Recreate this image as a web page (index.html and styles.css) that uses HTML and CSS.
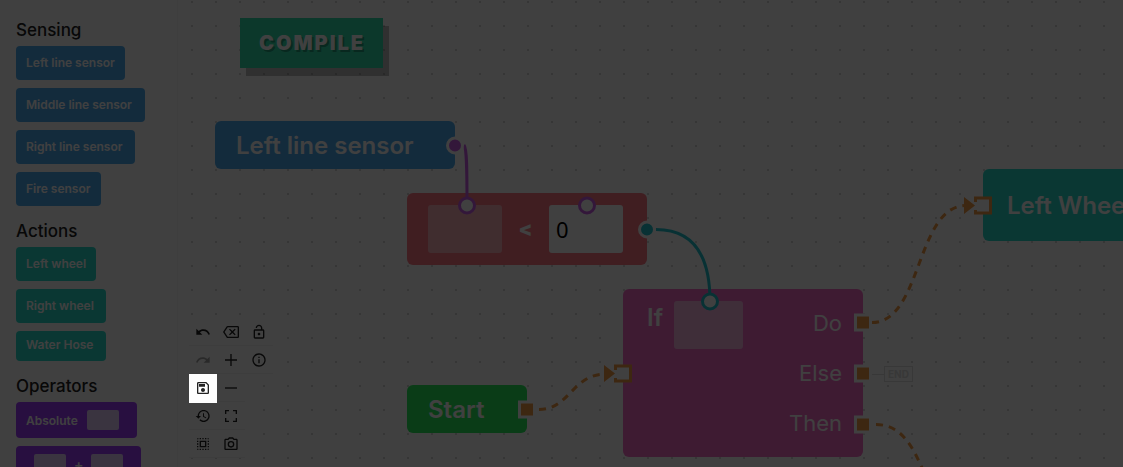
FILE: index.html
```html
<!DOCTYPE html>
<html lang="en">
<head>
<meta charset="utf-8">
<title>Robot block editor</title>
<link rel="stylesheet" href="styles.css">
</head>
<body>
<div class="app">
  <aside class="sidebar">
    <section class="group">
      <h2 class="group-title">Sensing</h2>
      <div class="chip sensing w-109">Left line sensor</div>
      <div class="chip sensing w-129">Middle line sensor</div>
      <div class="chip sensing w-119">Right line sensor</div>
      <div class="chip sensing w-85">Fire sensor</div>
    </section>
    <section class="group">
      <h2 class="group-title">Actions</h2>
      <div class="chip action w-80">Left wheel</div>
      <div class="chip action w-90">Right wheel</div>
      <div class="chip action short w-90">Water Hose</div>
    </section>
    <section class="group">
      <h2 class="group-title">Operators</h2>
      <div class="chip operator w-121">Absolute <span class="slot"></span></div>
      <div class="chip operator pair w-125"><span class="slot"></span>+<span class="slot"></span></div>
    </section>
  </aside>

  <main class="workspace">
    <div class="canvas">
      <div class="node sensor-node">Left line sensor</div>
      <div class="node less-node">
        <span class="field empty"></span>
        <span class="operator-sign">&lt;</span>
        <input class="field" type="text" value="0" aria-label="Right operand">
      </div>
      <div class="node if-node">
        <div class="condition">If <span class="field empty if-field"></span></div>
        <div class="branches"><span>Do</span><span>Else</span><span>Then</span></div>
      </div>
      <div class="node start-node">Start</div>
      <div class="node wheel-node">Left Wheel</div>

      <svg class="edges" width="945" height="467" viewBox="178 0 945 467" aria-hidden="true">
        <g fill="none" stroke-width="3">
          <path stroke="#cc5de8" d="M464 145C467 148 467 170 467 205.500"/>
          <path stroke="#22c4cf" d="M656 229.500C692 229.500 710 254 710 301.500"/>
          <g stroke="#f49a44" stroke-dasharray="7 6">
            <path d="M539 409.500C570 409.500 572 374 606 374"/>
            <path d="M872 322.500C922 322.500 916 205.500 966 205.500"/>
            <path d="M876 424.500C908 424.500 917 460 928 480"/>
          </g>
          <path stroke="#ddd" stroke-width="1" d="M872 374.500H884"/>
        </g>
        <g stroke-width="3">
          <g fill="#cc5de8" stroke="#fff"><circle cx="455" cy="145.500" r="7.500"/></g>
          <g fill="#fff" stroke="#cc5de8"><circle cx="467" cy="205.500" r="7.500"/><circle cx="587" cy="205.500" r="7.500"/></g>
          <circle cx="647" cy="229.500" r="7.500" fill="#22c4cf" stroke="#fff"/>
          <circle cx="710" cy="301.500" r="7.500" fill="#fff" stroke="#22c4cf"/>
          <g fill="#f49a44" stroke="#fff">
            <rect x="519.500" y="402" width="15" height="15"/>
            <rect x="855.500" y="315" width="15" height="15"/>
            <rect x="855.500" y="366" width="15" height="15"/>
            <rect x="855.500" y="417" width="15" height="15"/>
          </g>
          <g fill="#fff" stroke="#f49a44">
            <rect x="615.500" y="366" width="15" height="15"/>
            <rect x="975.500" y="198" width="15" height="15"/>
          </g>
        </g>
        <path fill="#fff" d="M614 370h3v8h-3zM974 202h3v8h-3z"/>
        <path fill="#f49a44" d="M604 365l11 8.500-11 8.500zM964 197l11 8.500-11 8.500z"/>
      </svg>
      <span class="end-tag">END</span>
      <button class="compile" type="button">COMPILE</button>
    </div>

    <div class="tools">
      <button class="tool" type="button" aria-label="Undo"><svg viewBox="0 0 24 24"><path d="M12.500 8c-2.650 0-5.050.990-6.900 2.600L2 7v9h9l-3.620-3.620c1.390-1.160 3.160-1.880 5.120-1.880 3.540 0 6.550 2.310 7.600 5.500l2.370-.780C21.080 11.030 17.150 8 12.500 8z"/></svg></button>
      <button class="tool" type="button" aria-label="Redo" disabled><svg viewBox="0 0 24 24"><path d="M18.400 10.600C16.550 8.990 14.150 8 11.500 8c-4.650 0-8.580 3.030-9.960 7.220L3.900 16c1.050-3.190 4.050-5.500 7.600-5.500 1.950 0 3.730.720 5.120 1.880L13 16h9V7l-3.600 3.600z"/></svg></button>
      <button class="tool spotlight" type="button" aria-label="Save"><svg viewBox="0 0 24 24"><path d="M17 3H5c-1.110 0-2 .900-2 2v14c0 1.100.890 2 2 2h14c1.100 0 2-.900 2-2V7l-4-4zm2 16H5V5h11.170L19 7.830V19zm-7-7c-1.660 0-3 1.340-3 3s1.340 3 3 3 3-1.340 3-3-1.340-3-3-3zM6 6h9v4H6z"/></svg></button>
      <button class="tool" type="button" aria-label="History"><svg viewBox="0 0 24 24"><path d="M13 3c-4.970 0-9 4.030-9 9H1l3.890 3.890.070.140L9 12H6c0-3.870 3.130-7 7-7s7 3.130 7 7-3.130 7-7 7c-1.930 0-3.680-.790-4.940-2.060l-1.420 1.420C8.270 19.990 10.510 21 13 21c4.970 0 9-4.030 9-9s-4.030-9-9-9zm-1 5v5l4.280 2.540.720-1.210-3.500-2.080V8H12z"/></svg></button>
      <button class="tool" type="button" aria-label="Select all"><svg viewBox="0 0 24 24"><path d="M3 5h2V3c-1.100 0-2 .900-2 2zm0 8h2v-2H3v2zm4 8h2v-2H7v2zM3 9h2V7H3v2zm10-6h-2v2h2V3zm6 0v2h2c0-1.100-.900-2-2-2zM5 21v-2H3c0 1.100.900 2 2 2zm-2-4h2v-2H3v2zM9 3H7v2h2V3zm2 18h2v-2h-2v2zm8-8h2v-2h-2v2zm0 8c1.100 0 2-.900 2-2h-2v2zm0-12h2V7h-2v2zm0 8h2v-2h-2v2zm-4 4h2v-2h-2v2zm0-16h2V3h-2v2zM7 17h10V7H7v10zm2-8h6v6H9V9z"/></svg></button>
      <button class="tool" type="button" aria-label="Delete"><svg viewBox="0 0 24 24"><path d="M22 3H7c-.690 0-1.230.350-1.590.880L0 12l5.410 8.110c.360.530.900.890 1.590.890h15c1.100 0 2-.900 2-2V5c0-1.100-.900-2-2-2zm0 16H7.070L2.400 12l4.660-7H22v14zm-11.590-2L14 13.410 17.590 17 19 15.590 15.410 12 19 8.410 17.590 7 14 10.590 10.410 7 9 8.410 12.590 12 9 15.590z"/></svg></button>
      <button class="tool" type="button" aria-label="Zoom in"><svg viewBox="0 0 24 24"><path d="M3 11h8V3h2v8h8v2h-8v8h-2v-8H3z"/></svg></button>
      <button class="tool" type="button" aria-label="Zoom out"><svg viewBox="0 0 24 24"><path d="M3 11h18v2H3z"/></svg></button>
      <button class="tool" type="button" aria-label="Fit view"><svg viewBox="0 0 24 24"><path d="M3 3h6v2H5v4H3zM15 3h6v6h-2V5h-4zM3 15h2v4h4v2H3zM19 15h2v6h-6v-2h4z"/></svg></button>
      <button class="tool" type="button" aria-label="Screenshot"><svg viewBox="0 0 24 24"><path d="M20 4h-3.170L15 2H9L7.170 4H4c-1.100 0-2 .900-2 2v13c0 1.100.900 2 2 2h16c1.100 0 2-.900 2-2V6c0-1.100-.900-2-2-2zm0 15H4V6h4.050l1.830-2h4.240l1.830 2H20v13zM12 7.500a5 5 0 1 0 0 10 5 5 0 0 0 0-10zm0 8a3 3 0 1 1 0-6 3 3 0 0 1 0 6z"/></svg></button>
      <button class="tool" type="button" aria-label="Unlock"><svg viewBox="0 0 24 24"><path d="M18 8h-1V6c0-2.760-2.240-5-5-5S7 3.240 7 6h2c0-1.660 1.340-3 3-3s3 1.340 3 3v2H6c-1.100 0-2 .900-2 2v10c0 1.100.900 2 2 2h12c1.100 0 2-.900 2-2V10c0-1.100-.900-2-2-2zm0 12H6V10h12v10zm-6-3c1.100 0 2-.900 2-2s-.900-2-2-2-2 .900-2 2 .900 2 2 2z"/></svg></button>
      <button class="tool" type="button" aria-label="Info"><svg viewBox="0 0 24 24"><path d="M11 7h2v2h-2zm0 4h2v6h-2zm1-9C6.480 2 2 6.480 2 12s4.480 10 10 10 10-4.480 10-10S17.520 2 12 2zm0 18c-4.410 0-8-3.590-8-8s3.590-8 8-8 8 3.590 8 8-3.590 8-8 8z"/></svg></button>
    </div>
  </main>
</div>
</body>
</html>
```
FILE: styles.css
```css
* { box-sizing: border-box; }

body {
  margin: 0;
  overflow: hidden;
  background: #fff;
  font-family: Inter, "Open Sans", sans-serif;
}

.app {
  display: flex;
  height: 100vh;
}

/* Block palette */
.sidebar {
  flex: 0 0 178px;
  padding: 17px 0 0 16px;
  overflow: hidden;
  background: #fff;
  border-right: 1px solid #f8f8f8;
}

.group {
  display: flex;
  flex-direction: column;
  align-items: flex-start;
  gap: 8px;
  margin-bottom: 12px;
}

.group-title {
  margin: 0 0 -5px;
  font-size: 17px;
  font-weight: 500;
  line-height: 26px;
  color: #222;
}

.chip {
  display: flex;
  align-items: center;
  height: 34px;
  padding: 0 10px 2px;
  border-radius: 4px;
  font-size: 12px;
  font-weight: 600;
  white-space: nowrap;
  color: #fff;
}

.sensing { background: #4dabf0; }
.action { background: #28dccc; }
.short { height: 30px; padding-bottom: 4px; }
.operator { height: 36px; padding-bottom: 0; gap: 9px; background: #a03cff; }
.pair { padding: 0 18px; gap: 8px; font-size: 14px; }

.slot {
  width: 32px;
  height: 20px;
  flex: none;
  border-radius: 2px;
  background: rgba(255, 255, 255, 0.75);
}

.w-80 { width: 80px; }
.w-85 { width: 85px; }
.w-90 { width: 90px; }
.w-109 { width: 109px; }
.w-119 { width: 119px; }
.w-121 { width: 121px; }
.w-125 { width: 125px; }
.w-129 { width: 129px; }

/* Diagram */
.workspace {
  position: relative;
  flex: 1;
  min-width: 0;
}

.canvas {
  position: relative;
  height: 100%;
  overflow: hidden;
  background: radial-gradient(circle, #bbb 0, #bbb 0.5px, transparent 1px) 2px -10px / 24px 24px;
}

.node {
  position: absolute;
  display: flex;
  align-items: center;
  width: 240px;
  height: 48px;
  padding: 0 21px;
  border-radius: 6px;
  font-size: 24px;
  font-weight: 600;
  white-space: nowrap;
  color: #fff;
}

.sensor-node { left: 37px; top: 121px; background: #4dabf0; }
.less-node { left: 229px; top: 193px; height: 72px; padding-right: 24px; justify-content: space-between; background: #ff7885; }
.start-node { left: 229px; top: 385px; width: 120px; background: #28f05c; }
.wheel-node { left: 805px; top: 169px; height: 72px; padding: 0 24px; background: #28dccc; }

.operator-sign {
  font-size: 20px;
  font-weight: 900;
}

.if-node {
  left: 445px;
  top: 289px;
  height: 168px;
  align-items: stretch;
  justify-content: space-between;
  background: #f86cc8;
}

.condition {
  display: flex;
  gap: 11px;
  padding: 12px 0 0 3px;
  line-height: 34px;
}

.branches {
  display: flex;
  flex-direction: column;
  justify-content: space-between;
  padding: 18px 0;
  font-size: 22px;
  font-weight: 400;
  line-height: 32px;
  text-align: right;
}

.field {
  width: 74px;
  height: 48px;
  padding: 0 7px;
  border: 0;
  border-radius: 3px;
  background: #fff;
  color: #000;
  font: 22px "Noto Sans", sans-serif;
}

.empty { background: rgba(255, 255, 255, 0.5); }
.less-node .empty { background: rgba(255, 255, 255, 0.45); }
.if-field { width: 69px; }

.edges {
  position: absolute;
  left: 0;
  top: 0;
}

.end-tag {
  position: absolute;
  left: 706px;
  top: 366px;
  padding: 0 3px;
  border: 1px solid #ddd;
  font-size: 10px;
  font-weight: 700;
  line-height: 14px;
  color: #ddd;
}

.compile {
  position: absolute;
  left: 62px;
  top: 18px;
  height: 50px;
  padding: 0 18px 0 19px;
  border: 0;
  background: #30e0ac;
  box-shadow: 6px 8px 0 rgba(0, 0, 0, 0.25);
  color: #fff;
  font-family: inherit;
  font-size: 20px;
  font-weight: 900;
  letter-spacing: 2px;
  text-shadow: 2px 2px 0 rgba(0, 0, 0, 0.3);
}

/* Canvas controls */
.tools {
  position: absolute;
  left: 11px;
  bottom: 9px;
  display: grid;
  grid-template-rows: repeat(5, 28px);
  grid-auto-flow: column;
  grid-auto-columns: 28px;
}

.tool {
  display: flex;
  align-items: center;
  justify-content: center;
  padding: 0;
  border: 0;
  border-bottom: 1px solid #f4f4f4;
  background: #fefefe;
}

.tool svg { width: 16px; height: 16px; fill: #222; }
.tool:disabled svg { opacity: 0.4; }

/* Highlighted control; its shadow dims the rest of the page */
.spotlight {
  position: relative;
  z-index: 10;
  height: 29px;
  border-bottom-color: #fefefe;
  box-shadow: 0 0 0 2000px rgba(0, 0, 0, 0.75);
}
```
